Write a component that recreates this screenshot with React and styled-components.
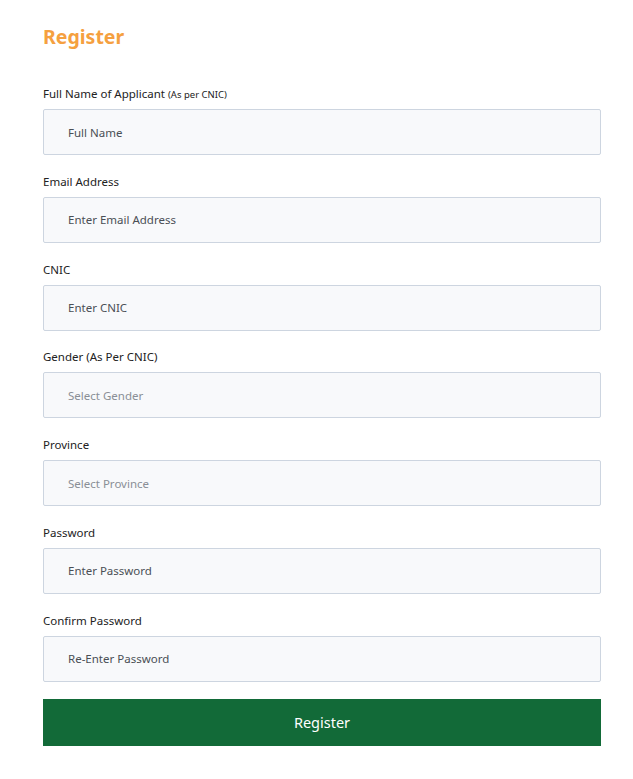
import React from "react";
import styled, { createGlobalStyle } from "styled-components";

const GlobalStyle = createGlobalStyle`
  body {
    margin: 0;
    background: #fff;
    font-family: "Noto Sans", "Open Sans", sans-serif;
    color: #212529;
  }
`;

const fields = [
  { label: "Full Name of Applicant", note: "(As per CNIC)", placeholder: "Full Name" },
  { label: "Email Address", placeholder: "Enter Email Address" },
  { label: "CNIC", placeholder: "Enter CNIC" },
  { label: "Gender (As Per CNIC)", placeholder: "Select Gender", select: true },
  { label: "Province", placeholder: "Select Province", select: true },
  { label: "Password", placeholder: "Enter Password" },
  { label: "Confirm Password", placeholder: "Re-Enter Password" },
];

function App() {
  return (
    <>
      <GlobalStyle />
      <Page>
        <Title>Register</Title>
        <Form onSubmit={(e) => e.preventDefault()}>
          {fields.map((f) => (
            <Field key={f.label}>
              <Label>
                {f.label} {f.note && <Note>{f.note}</Note>}
              </Label>
              <Input as="div" $muted={f.select}>
                {f.placeholder}
              </Input>
            </Field>
          ))}
          <SubmitButton type="submit">Register</SubmitButton>
        </Form>
      </Page>
    </>
  );
}

const Page = styled.div`
  width: 558px;
  padding: 20px 0 0 43px;
`;

const Title = styled.h2`
  margin: 0 0 32px;
  font-size: 19.5px;
  line-height: 34px;
  font-weight: 700;
  color: #f5a03f;
`;

const Form = styled.form`
  display: flex;
  flex-direction: column;
  gap: 18.8px;
`;

const Field = styled.div`
  display: flex;
  flex-direction: column;
  gap: 7px;
`;

const Label = styled.label`
  display: block;
  height: 16px;
  font-size: 11.5px;
  line-height: 16px;
  color: #222;
`;

const Note = styled.span`
  font-size: 9.5px;
  line-height: 1;
`;

const Input = styled.input`
  box-sizing: border-box;
  height: 46px;
  display: flex;
  align-items: center;
  padding: 0 24px;
  background: #f8f9fb;
  border: 1px solid #cdd5e0;
  border-radius: 2px;
  font-size: 11.5px;
  color: ${(p) => (p.$muted ? "#8a8f96" : "#4a4f55")};
`;

const SubmitButton = styled.button`
  margin-top: -1.8px;
  height: 47px;
  border: none;
  border-radius: 0;
  background: #126a38;
  color: #fff;
  font-family: inherit;
  font-size: 14.5px;
  cursor: pointer;
`;

export default App;
